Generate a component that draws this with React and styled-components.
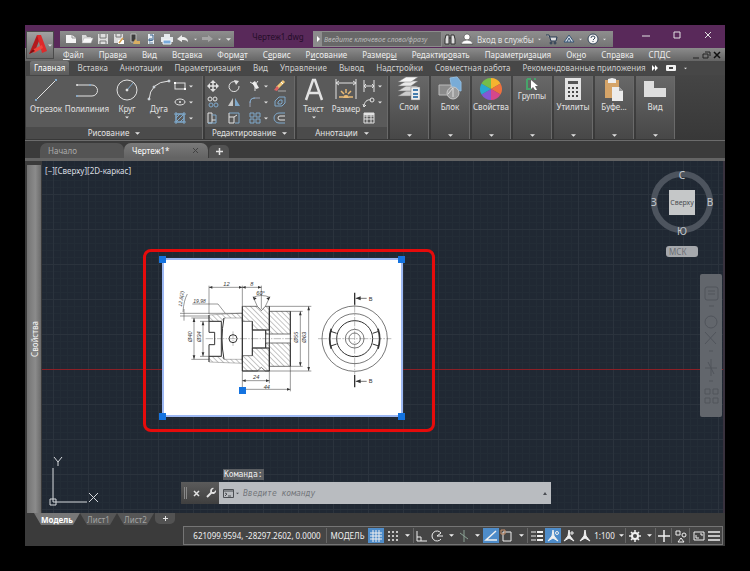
import React from "react";
import styled, { createGlobalStyle } from "styled-components";

const GlobalStyle = createGlobalStyle`
  * {
    box-sizing: border-box;
  }

  body {
    margin: 0;
    background-color: #000000;
    font-family: "Noto Sans", "Open Sans", sans-serif;
    font-size: 8px;
    color: #e2e2e2;
  }

  button, input {
    margin: 0;
    padding: 0;
    border: 0;
    background: none;
    color: inherit;
    font: inherit;
  }

  a {
    color: inherit;
    text-decoration: none;
  }

  svg {
    display: block;
    flex: none;
    overflow: visible;
  }
`;

const Page = styled.div`
  min-height: 100vh;
  padding: 25px;
  display: flex;
`;

const Window = styled.div`
  flex: 1;
  min-width: 0;
  display: flex;
  flex-direction: column;
  overflow: hidden;
  background-color: #3b3b3b;
`;

/* ---------- header ---------- */

const Header = styled.header`
  display: grid;
  grid-template-columns: 29px 1fr;
  grid-template-rows: 23px 13px;
  background: linear-gradient(#59295a 23px, #8b8b8b 23px, #656565);
`;

const AppButton = styled.button`
  grid-row: 1 / 3;
  margin: 6px 0 2px 1px;
  display: flex;
  align-items: center;
  justify-content: center;
  gap: 1px;
  background: linear-gradient(#a2a2a2, #6a6a6a);
  border: 1px solid #4a4a4a;
`;

const TitleBar = styled.div`
  display: flex;
  align-items: flex-end;
  min-width: 0;
  padding: 0 0 1px 6px;
`;

const QuickAccess = styled.div`
  display: flex;
  align-items: center;
  width: 174px;
  height: 16px;
  padding-left: 3px;
  background: linear-gradient(#8e8e8e, #707070);
`;

const QuickButton = styled.button`
  width: ${(p) => p.$width || 16}px;
  height: 16px;
  display: flex;
  align-items: center;
  justify-content: center;
`;

const FileName = styled.div`
  width: 79px;
  height: 16px;
  padding-left: 9px;
  text-align: center;
  line-height: 12px;
  color: #240d28;
`;

const Search = styled.form`
  display: flex;
  height: 16px;
  padding: 1px;
  background-color: #8c8c8c;
`;

const SearchToggle = styled.button`
  width: 8px;
  display: flex;
  align-items: center;
  justify-content: center;
`;

const SearchInput = styled.input`
  width: 119px;
  padding-left: 2px;
  background-color: #686868;
  font-size: 7px;
  font-style: italic;

  &::placeholder {
    color: #bababa;
    opacity: 1;
  }
`;

const InfoCenter = styled.div`
  display: flex;
  align-items: center;
  gap: 5px;
  width: 171px;
  height: 16px;
  padding-left: 2px;
  background: linear-gradient(#8e8e8e, #747474);
`;

const InfoButton = styled.button`
  display: flex;
  align-items: center;
  gap: 4px;
  white-space: nowrap;
`;

const WindowControls = styled.div`
  flex: 1;
  display: flex;
  justify-content: flex-end;
  gap: 17px;
  padding: 0 10px 5px 0;
`;

const ControlButton = styled.button`
  width: 14px;
  height: 14px;
  display: flex;
  align-items: center;
  justify-content: center;
`;

const MenuBar = styled.nav`
  display: flex;
  align-items: center;
  gap: 15px;
  min-width: 0;
  padding: 0 4px 0 9px;
  line-height: 12px;
  white-space: nowrap;
  color: #ededed;

  u {
    text-underline-offset: 1px;
  }
`;

const MdiControls = styled.div`
  margin-left: auto;
  display: flex;
  gap: 2px;
`;

/* ---------- ribbon ---------- */

const RibbonTabs = styled.div`
  display: flex;
  align-items: stretch;
  height: 14px;
  padding-left: 5px;
  background-color: #474747;
  white-space: nowrap;
`;

const RibbonTab = styled.button`
  padding: 0 ${(p) => (p.$active ? 4 : 6)}px;
  margin-right: ${(p) => (p.$active ? 2 : 0)}px;
  line-height: 12px;
  color: ${(p) => (p.$active ? "#ffffff" : "#d0d0d0")};
  background: ${(p) => (p.$active ? "linear-gradient(#777777, #5b5b5b)" : "none")};
  border-radius: 2px 2px 0 0;
`;

const RibbonExtra = styled.button`
  display: flex;
  align-items: center;
  gap: 8px;
`;

const Ribbon = styled.div`
  display: flex;
  gap: 2px;
  height: 66px;
  padding: 1px;
  background: linear-gradient(#454545, #383838);
  border-bottom: 1px solid #6c6c6c;
`;

const Panel = styled.section`
  display: flex;
  flex-direction: column;
  width: ${(p) => p.$width}px;
  background-color: #5a5a5a;
  border-right: 1px solid #6a6a6a;
`;

const PanelBody = styled.div`
  flex: 1;
  display: flex;
  align-items: flex-start;
  padding: 2px 0 0 ${(p) => p.$left || 0}px;
`;

const PanelTitle = styled.button`
  display: flex;
  align-items: center;
  justify-content: center;
  gap: 6px;
  height: 12px;
  line-height: 12px;
  background-color: #4b4b4b;
`;

const BigTool = styled.button`
  width: ${(p) => p.$width}px;
  display: flex;
  flex-direction: column;
  align-items: center;
  gap: 1px;
  white-space: nowrap;
  line-height: 12px;
`;

const ToolIcon = styled.span`
  height: 24px;
  display: flex;
  align-items: center;
`;

const SmallTools = styled.div`
  display: grid;
  grid-template-columns: ${(p) => p.$columns};
  grid-auto-rows: 16px;
`;

const SmallTool = styled.button`
  display: flex;
  align-items: center;
  gap: 3px;
`;

const FoldedPanel = styled.button`
  width: 39px;
  display: flex;
  flex-direction: column;
  align-items: center;
  padding: 1px 0 2px;
  background: linear-gradient(#686868, #474747);
  border-right: 1px solid #6a6a6a;
  line-height: 12px;
  white-space: nowrap;

  > :last-child {
    margin-top: auto;
  }
`;

const FoldedIcon = styled.span`
  height: ${(p) => (p.$small ? 13 : 24)}px;
  display: flex;
  align-items: center;
`;

/* ---------- document tabs ---------- */

const DocTabs = styled.div`
  display: flex;
  align-items: flex-end;
  height: 17px;
  padding-left: 15px;
`;

const DocTab = styled.button`
  display: flex;
  align-items: center;
  justify-content: space-between;
  width: 84px;
  height: 15px;
  padding: 0 10px 0 8px;
  border-radius: 7px 7px 0 0;
  color: ${(p) => (p.$active ? "#ffffff" : "#a9a9a9")};
  background: ${(p) => (p.$active ? "linear-gradient(#7a7a7a, #636363)" : "#545454")};
`;

const AddTab = styled.button`
  display: flex;
  align-items: center;
  justify-content: center;
  width: 20px;
  height: ${(p) => p.$height}px;
  margin-left: 1px;
  border-radius: ${(p) => (p.$bottom ? "0 0 5px 5px" : "5px 5px 0 0")};
  background-color: #525252;
`;

/* ---------- workspace ---------- */

const Workspace = styled.main`
  flex: 1;
  display: flex;
  min-height: 352px;
  border-top: 3px solid #646464;
  box-sizing: content-box;
`;

const PaletteBar = styled.aside`
  width: 14px;
  margin: 4px 1px 0 2px;
  display: flex;
  align-items: center;
  justify-content: center;
  background: linear-gradient(90deg, #747474, #8b8b8b 60%, #6b6b6b);
  color: #f5f5f5;

  span {
    writing-mode: vertical-rl;
    transform: rotate(180deg);
  }
`;

const Canvas = styled.div`
  position: relative;
  flex: 1;
  border-right: 2px solid #39323e;
  background-color: #202833;
  background-image:
    linear-gradient(#2b333d 1px, transparent 1px),
    linear-gradient(90deg, #2b333d 1px, transparent 1px),
    linear-gradient(#232c36 1px, transparent 1px),
    linear-gradient(90deg, #232c36 1px, transparent 1px);
  background-size: 35px 35px, 35px 35px, 7px 7px, 7px 7px;
  background-position: 11px 33px;
`;

const AxisLine = styled.div`
  position: absolute;
  left: 0;
  right: 0;
  top: 208px;
  height: 1px;
  background-color: #8c1f26;
`;

const ViewLabel = styled.div`
  position: absolute;
  left: 3px;
  top: 4px;
  line-height: 12px;
  color: #d8dce0;
`;

const Highlight = styled.div`
  position: absolute;
  left: 101px;
  top: 88px;
  width: 292px;
  height: 183px;
  border: 3px solid #e60b0b;
  border-radius: 8px;
`;

const Picture = styled.figure`
  position: absolute;
  left: 120px;
  top: 97px;
  width: 241px;
  height: 159px;
  margin: 0;
  border: 2px solid #9db8f3;
  background-color: #ffffff;
`;

const Grip = styled.i`
  position: absolute;
  left: ${(p) => p.$x}px;
  top: ${(p) => p.$y}px;
  width: 7px;
  height: 7px;
  background-color: #1473e0;
`;

const ViewCube = styled.div`
  position: absolute;
  right: 8px;
  top: 6px;
`;

const UcsButton = styled.button`
  position: absolute;
  right: 25px;
  top: 85px;
  width: 32px;
  height: 11px;
  padding-left: 3px;
  text-align: left;
  line-height: 10px;
  border-radius: 3px;
  background-color: #a5a8ac;
  color: #6b6e73;
`;

const NavBar = styled.div`
  position: absolute;
  right: 1px;
  top: 113px;
  width: 22px;
  height: 143px;
  border-radius: 2px;
  background-color: #62666c;
`;

const UcsIcon = styled.div`
  position: absolute;
  left: 7px;
  bottom: 7px;
`;

const CommandTag = styled.div`
  position: absolute;
  left: 181px;
  bottom: 33px;
  width: 41px;
  height: 11px;
  padding-left: 1px;
  background-color: #5c5f63;
  font-family: "DejaVu Sans Mono", monospace;
  line-height: 11px;
  color: #f0f0f0;
`;

const CommandLine = styled.form`
  position: absolute;
  left: 139px;
  bottom: 9px;
  width: 370px;
  height: 22px;
  display: flex;
  background-color: #b9bcc0;
`;

const CommandTools = styled.div`
  width: 38px;
  display: flex;
  align-items: center;
  gap: 6px;
  padding-left: 3px;
  background: linear-gradient(#5b5b5b, #3f3f3f);
`;

const CommandInput = styled.input`
  flex: 1;
  min-width: 0;
  font-family: "DejaVu Sans Mono", monospace;
  font-style: italic;

  &::placeholder {
    color: #74777c;
    opacity: 1;
  }
`;

const CommandButton = styled.button`
  display: flex;
  align-items: center;
  gap: 2px;
  padding: 0 4px;
  color: #4b4e53;
`;

/* ---------- bottom ---------- */

const LayoutTabs = styled.div`
  display: flex;
  height: 13px;
  padding-left: 9px;
`;

const LayoutTab = styled.button`
  width: ${(p) => (p.$active ? 46 : 37)}px;
  height: 12px;
  clip-path: polygon(0 0, 100% 0, calc(100% - 7px) 100%, 7px 100%);
  line-height: 11px;
  font-weight: ${(p) => (p.$active ? 700 : 400)};
  color: ${(p) => (p.$active ? "#ffffff" : "#a3a3a3")};
  background: ${(p) => (p.$active ? "#777777" : "#565656")};
`;

const StatusBar = styled.footer`
  display: flex;
  align-items: center;
  height: 19px;
  margin: 0 2px 1px 158px;
  border: 1px solid #757575;
  background-color: #454545;
  color: #f0f0f0;
`;

const Coords = styled.div`
  flex: none;
  width: 143px;
  padding-left: 4px;
  text-align: center;
  border-right: 1px solid #666666;
  line-height: 15px;
  white-space: nowrap;
`;

const StatusButton = styled.button`
  flex: none;
  width: ${(p) => p.$width}px;
  height: 15px;
  display: flex;
  align-items: center;
  justify-content: center;
  gap: 4px;
  background-color: ${(p) => (p.$on ? "#4e8cc9" : "transparent")};
  border-left: ${(p) => (p.$split ? "1px solid #666666" : "0")};
`;

/* ---------- icons ---------- */

function Icon({ w = 12, h = w, box, children, ...rest }) {
  return (
    <svg
      width={w}
      height={h}
      viewBox={box || `0 0 ${w} ${h}`}
      fill="none"
      stroke="currentColor"
      aria-hidden="true"
      {...rest}
    >
      {children}
    </svg>
  );
}

const Caret = ({ w = 5 }) => (
  <Icon w={w} h={3} box="0 0 6 3">
    <path d="M0 0H6L3 3Z" fill="currentColor" stroke="none" />
  </Icon>
);

const blue = "#7fa9cc";

const quickIcons = [
  ["Создать", <Icon><path d="M1 2H7L11 5V10H1Z" fill="#f4f4f4" stroke="none" /><path d="M7 2V5H11" stroke="#999999" /></Icon>],
  ["Открыть", <Icon><path d="M1 10V2H5L6 4H10V6" fill="#d9d9d9" stroke="none" /><path d="M1 10L3 5H12L10 10Z" fill="#f8f8f8" stroke="#aaaaaa" strokeWidth=".5" /></Icon>],
  ["Сохранить", <Icon><path d="M1 1H11V11H1Z" fill="#dddddd" stroke="none" /><path d="M3 1V5H9V1M3 11V8H9V11" stroke="#777777" /></Icon>],
  ["Сохранить как", <Icon><path d="M1 1H10V10H1Z" fill="#dddddd" stroke="none" /><path d="M3 1V4H8V1" stroke="#777777" /><path d="M5 7H11V11H5Z" fill="#ffffff" stroke="none" /><path d="M6 10L10 5" stroke="#d69d48" strokeWidth="1.5" /></Icon>],
  ["Веб", <Icon><path d="M2 1H7V9H2Z" fill="#3c3c3c" stroke="#bbbbbb" /><path d="M4 11H11V8H8L6 6Z" fill="#d9ae62" stroke="none" /></Icon>],
  ["Мобильные", <Icon><path d="M3 1H9V11H3Z" fill="#e8eef4" stroke="none" /><path d="M5 2H8V7L4 8V6H7" stroke="#315a85" /><path d="M4 10H8" stroke="#64809c" /></Icon>],
  ["Печать", <Icon><path d="M3 1H9V5H3ZM0 4H12V9H0Z" fill="#e5e9ed" stroke="none" /><path d="M2 7H10V11H2Z" fill="#79abdc" stroke="#f5f5f5" /></Icon>],
  ["Отменить", <Icon><path d="M0 6L5 2V4C9 4 11 6 11 9C9 7 8 7 5 7V9Z" fill="#eeeeee" stroke="none" /></Icon>],
];

const AppLogo = () => (
  <Icon w={18} h={20} stroke="none">
    <path d="M0 19L8 0L12 1L6 16Z" fill="#b3191d" />
    <path d="M8 0H12L18 16L13 18Z" fill="#dd2a2b" />
    <path d="M3 15L13 10L14 13L5 18Z" fill="#f0443c" />
    <path d="M0 19L4 14L6 16Z" fill="#7d0e12" />
  </Icon>
);

const smallDraw = [
  <Icon><rect x="1" y="3" width="10" height="6" /><path d="M0 2H2V4H0ZM10 8H12V10H10Z" fill="#ffffff" stroke="none" /></Icon>,
  <Icon><ellipse cx="6" cy="6" rx="5" ry="3" /><circle cx="6" cy="6" r="1" fill="currentColor" stroke="none" /></Icon>,
  <Icon stroke={blue}><path d="M2 2H10V10H2ZM0 2H12M0 10H12M2 0V12M10 0V12M2 6L6 2M2 10L10 2M6 10L10 6" /></Icon>,
];

const editTools = [
  [<Icon><path d="M6 1V11M1 6H11" strokeWidth="1.5" /><path d="M6 0L9 3H3ZM6 12L3 9H9ZM0 6L3 3V9ZM12 6L9 9V3Z" fill="currentColor" stroke="none" /></Icon>],
  [<Icon><path d="M8 2A5 5 0 1 0 11 6" /><path d="M6 0L11 1L8 5Z" fill="currentColor" stroke="none" /></Icon>],
  [<Icon><path d="M1 2L6 5L9 1M6 5V11" /><path d="M3 3L6 1L10 8L7 9Z" fill="#eeeeee" stroke="none" /></Icon>, true],
  [<Icon><path d="M3 8L10 1" stroke="#f1c777" strokeWidth="3" /><path d="M0 10L3 6L5 8L3 11Z" fill="#dc6161" stroke="none" /><path d="M7 2L9 4" stroke="#ffffff" /><path d="M4 11H12" stroke="#aaaaaa" /></Icon>],
  [<Icon><circle cx="3" cy="3" r="2" /><circle cx="8" cy="3" r="2" /><circle cx="4" cy="9" r="2" stroke={blue} /><circle cx="9" cy="9" r="2" stroke={blue} /></Icon>],
  [<Icon><path d="M5 2V10H0Z" fill="#c6c6c6" stroke="none" /><path d="M7 2V10H12Z" fill={blue} stroke="none" /></Icon>],
  [<Icon><path d="M1 11V7Q1 2 6 2H11" stroke="#9a9fb0" /><path d="M1 7Q1 2 6 2" stroke={blue} /></Icon>, true],
  [<Icon stroke={blue}><path d="M1 10V5L5 1H11V7L8 10Z" /><path d="M4 8V6L6 4H8V7L7 8Z" /></Icon>],
  [<Icon><path d="M1 11V1H5V11ZM5 8H9" /><path d="M5 3H9V11H1" stroke={blue} /></Icon>],
  [<Icon><path d="M1 1H11V11H7" stroke={blue} /><path d="M1 5H6V11H1ZM1 5V1M6 5L9 3" /></Icon>],
  [<Icon stroke={blue}><path d="M1 1H5V5H1ZM7 1H11V5H7ZM1 7H5V11H1ZM7 7H11V11H7Z" /></Icon>, true],
  [<Icon><path d="M11 1H5A5 5 0 0 0 5 11H11" stroke={blue} /><path d="M11 4H6A2 2 0 0 0 6 8H11" /></Icon>],
];

const annotationTools = [
  [<Icon><path d="M1 0V12M11 0V12M1 6H11M3 4L1 6L3 8M9 4L11 6L9 8" /></Icon>, true],
  [<Icon><path d="M1 11C1 6 4 3 8 4M0 8L1 11L3 9" /><circle cx="9" cy="4" r="2" /></Icon>, true],
  [<Icon><path d="M1 1H11V11H1ZM1 4H11M1 7H11M4 2V11M8 2V11" /><path d="M1 2H11" strokeWidth="2" /></Icon>],
];

const Wheel = () => (
  <Icon w={24} stroke="none">
    <path d="M12 12V1A11 11 0 0 1 21.5 6.5Z" fill="#f6b32f" />
    <path d="M12 12L21.5 6.5A11 11 0 0 1 21.5 17.5Z" fill="#ef713e" />
    <path d="M12 12L21.5 17.5A11 11 0 0 1 12 23Z" fill="#d6478b" />
    <path d="M12 12V23A11 11 0 0 1 2.5 17.5Z" fill="#8357d5" />
    <path d="M12 12L2.5 17.5A11 11 0 0 1 2.5 6.5Z" fill="#28a9cf" />
    <path d="M12 12L2.5 6.5A11 11 0 0 1 12 1Z" fill="#75bd4a" />
  </Icon>
);

const foldedPanels = [
  ["Слои", <Icon w={22} h={24} stroke="#777777" strokeWidth=".5"><path d="M0 19L8 14H20L13 19Z" fill="#cccccc" /><path d="M0 14L8 9H20L13 14Z" fill="#d9d9d9" /><path d="M0 9L8 4H20L13 9Z" fill="#e9e9e9" /><path d="M0 5L8 0H20L13 5Z" fill="#f5f5f5" /><path d="M13 10H22V23H13Z" fill="#eeeeee" /><path d="M15 13H20M15 17H20M15 20H20" stroke="#477eae" strokeWidth="2" /></Icon>],
  ["Блок", <Icon w={24}><path d="M12 1L19 0L23 5V14L14 12Z" fill="#79acd7" stroke="#90bce1" /><path d="M1 8H13V18H1Z" fill="#8b8b8b" stroke="#bbbbbb" /><circle cx="15" cy="16" r="6" fill="#9c9c9c" stroke="#c8c8c8" /><path d="M15 11V20M10 17L15 11" stroke="#dddddd" /></Icon>],
  ["Свойства", <Wheel />],
  ["Группы", <Icon w={12}><path d="M1 1H5M1 1V11H5M8 1H10" stroke="#47a36a" strokeWidth="2" /><path d="M5 2L12 8L9 8L11 12L9 12L7 9L5 11Z" fill="#ffffff" stroke="none" /></Icon>, true],
  ["Утилиты", <Icon w={18} h={23}><path d="M1 0H17V22H1Z" fill="#e4e4e4" stroke="none" /><path d="M4 3H14V6H4Z" fill="#555555" stroke="none" /><path d="M4 10H14M4 14H14M4 18H14" stroke="#484848" strokeWidth="2" strokeDasharray="2 2" /></Icon>],
  ["Буфе...", <Icon w={20} h={23} stroke="none"><path d="M1 2H15V20H1Z" fill="#d5a468" /><path d="M4 1L8 0L12 1V5H4Z" fill="#eeeeee" /><path d="M8 9H15L19 13V23H8Z" fill="#ececec" /><path d="M15 9V13H19Z" fill="#999999" /></Icon>],
  ["Вид", <Icon w={22} h={18} stroke="none"><path d="M0 1H10V8H22V17H0Z" fill="#dedede" /></Icon>],
];

const menus = [
  ["", "Ф", "айл"],
  ["Прав", "к", "а"],
  ["Ви", "д", ""],
  ["Вс", "т", "авка"],
  ["Форм", "а", "т"],
  ["С", "е", "рвис"],
  ["Р", "и", "сование"],
  ["Размер", "ы", ""],
  ["Редактир", "о", "вать"],
  ["Параметри", "з", "ация"],
  ["Ок", "н", "о"],
  ["Спр", "а", "вка"],
  ["СПДС", "", ""],
];

const ribbonTabs = [
  "Главная",
  "Вставка",
  "Аннотации",
  "Параметризация",
  "Вид",
  "Управление",
  "Вывод",
  "Надстройки",
  "Совместная работа",
  "Рекомендованные приложения",
];

function ToolGrid({ tools, columns, name }) {
  return (
    <SmallTools $columns={columns}>
      {tools.map(([icon, caret], i) => (
        <SmallTool key={i} aria-label={`${name} ${i + 1}`}>
          {icon}
          {caret && <Caret w={4} />}
        </SmallTool>
      ))}
    </SmallTools>
  );
}

/* Adapter section on the left, front view on the right */
function PartDrawing() {
  return (
    <svg width="237" height="155" viewBox="70 48 711 465" fill="none" stroke="#333333" strokeWidth="2">
      <defs>
        <pattern id="hatch" width="11" height="11" patternUnits="userSpaceOnUse" patternTransform="rotate(-45)">
          <path d="M0 0V11" stroke="#555555" strokeWidth="2" />
        </pattern>
      </defs>
      <path d="M305 187H350L362 200L374 187H386V258H335V232H305ZM305 335H335V312H386V381H374L362 370L350 381H305Z" fill="url(#hatch)" />
      <path d="M386 202H449V270H375V258H386ZM375 297H449V367H386V312H375Z" fill="url(#hatch)" />
      <path d="M205 213L305 207V222H250L242 232H205ZM205 337H242L250 346H305V358L205 354Z" fill="url(#hatch)" strokeWidth="1" />
      <path d="M205 213V265H222V302H205V354M205 232H242V337H205M250 222Q238 284 250 346M305 187V381H386V187M305 222V346M335 232V335M335 258H375V312H335M449 202V367" strokeWidth="3" />
      <circle cx="277" cy="284" r="12" strokeWidth="3" />
      <path d="M195 284H470M277 262V306" strokeWidth="1" strokeDasharray="22 4 4 4" />
      <g strokeWidth="1.5">
        <path d="M205 125V210M305 125V187M362 125V195M205 130H362M386 187H512M386 381H512M504 187V381M449 202H486M449 367H486M479 202V367" />
        <path d="M305 381V430M386 381V418M305 410H386M449 367V442M315 436H449" />
        <path d="M160 222V346M187 232V337M152 222H205M152 346H205M178 232H205M178 337H205M118 208H305M118 216H205M130 195V230M127 204Q129 170 140 150M155 180H232L254 208" />
        <path d="M350 187L337 158M374 187L388 158M337 160Q362 149 388 160" />
      </g>
      <g fill="#333333" stroke="none">
        <path d="M205 130L215 126V134ZM305 130L295 126V134ZM305 130L315 126V134ZM362 130L352 126V134ZM305 410L315 406V414ZM386 410L376 406V414ZM449 436L439 432V440Z" />
        <path d="M504 187L500 199H508ZM504 381L500 369H508ZM479 202L475 214H483ZM479 367L475 355H483ZM160 222L156 234H164ZM160 346L156 334H164ZM187 232L183 244H191ZM187 337L183 325H191Z" />
        <path d="M337 158L340 169L348 163ZM388 158L377 163L384 169ZM645 163L660 157V169ZM645 412L660 406V418Z" />
      </g>
      <circle cx="642" cy="284" r="98" />
      <circle cx="642" cy="284" r="75" />
      <circle cx="642" cy="284" r="54" strokeWidth="3" />
      <circle cx="642" cy="284" r="28" />
      <circle cx="642" cy="284" r="17" />
      <path d="M572 254Q562 284 572 314M712 254Q722 284 712 314" strokeWidth="5" />
      <path d="M570 262L588 268M570 306L588 300M714 262L696 268M714 306L696 300" strokeWidth="3" />
      <path d="M532 284H752M642 178V392" strokeWidth="1" strokeDasharray="28 4 5 4" />
      <path d="M642 146V182M642 393V430" strokeWidth="4" />
      <path d="M645 163H678M645 412H678" />
      <g fill="#333333" stroke="none" fontFamily="Liberation Sans, sans-serif" fontSize="17" fontStyle="italic">
        <text x="248" y="125">12</text>
        <text x="329" y="125">8</text>
        <text x="347" y="154">60°</text>
        <text x="337" y="406">24</text>
        <text x="369" y="434">44</text>
        <text x="158" y="176" fontSize="15">19,98</text>
        <text x="684" y="170" fontStyle="normal">B</text>
        <text x="684" y="418" fontStyle="normal">B</text>
        <text transform="translate(123 188) rotate(-82)" fontSize="15">12,8(2)</text>
        <text transform="translate(154 294) rotate(-90)">Ø40</text>
        <text transform="translate(180 294) rotate(-90)">Ø34</text>
        <text transform="translate(471 296) rotate(-90)">Ø55</text>
        <text transform="translate(497 296) rotate(-90)">Ø63</text>
      </g>
    </svg>
  );
}

const Person = ({ n }) => (
  <Icon>
    <path d="M6 0L7 6L11 11L6 8L1 11L5 6Z" fill="currentColor" />
    {n === 1 && <path d="M9 1V5M7 3H11" />}
    {n === 2 && <circle cx="10" cy="3" r="1.5" />}
  </Icon>
);

const statusItems = [
  { w: 16, on: true, icon: <Icon><path d="M3 0V12M6 0V12M9 0V12M0 3H12M0 6H12M0 9H12" /></Icon>, name: "Сетка" },
  { w: 17, icon: <Icon><path d="M1 2H11M1 6H11M1 10H11" strokeWidth="1.5" strokeDasharray="2 2" /></Icon>, name: "Шаг" },
  { w: 12, icon: <Caret />, name: "Параметры шага" },
  { w: 16, split: true, icon: <Icon><path d="M1 1V11H11M1 7H5V11" /></Icon>, name: "Орто" },
  { w: 16, icon: <Icon><path d="M10 3A5 5 0 1 0 10 9M6 6H12M6 6L10 3" /></Icon>, name: "Полярное отслеживание" },
  { w: 12, icon: <Caret />, name: "Параметры отслеживания" },
  { w: 14, icon: <Icon stroke="#8aa193"><path d="M6 0V12M2 3L10 9" /></Icon>, name: "Изометрия" },
  { w: 12, icon: <Caret />, name: "Параметры изометрии" },
  { w: 16, on: true, icon: <Icon><path d="M11 1L1 10H12" strokeWidth="1.5" /></Icon>, name: "Объектное отслеживание" },
  { w: 16, icon: <Icon><path d="M2 2H10V11H2Z" /><path d="M0 0H4V4H0Z" stroke="#c68f6b" /></Icon>, name: "Привязка" },
  { w: 12, icon: <Caret />, name: "Параметры привязки" },
  { w: 18, split: true, icon: <Icon><path d="M0 2H5M0 6H5M0 10H5" /><path d="M6 2H12M6 6H12M6 10H12" strokeWidth="2" /></Icon>, name: "Вес линий" },
  { w: 16, on: true, icon: <Person n={2} />, name: "Видимость аннотаций" },
  { w: 16, icon: <Person n={1} />, name: "Автомасштаб" },
  { w: 16, icon: <Person n={0} />, name: "Масштаб аннотаций" },
  { w: 32, icon: <>1:100 <Caret /></>, name: "Масштаб 1:100" },
  { w: 18, split: true, icon: <Icon><circle cx="6" cy="6" r="3" strokeWidth="2" /><path d="M6 0V3M6 9V12M0 6H3M9 6H12M2 2L4 4M8 8L10 10M10 2L8 4M4 8L2 10" strokeWidth="1.5" /></Icon>, name: "Рабочее пространство" },
  { w: 12, icon: <Caret />, name: "Параметры пространства" },
  { w: 16, split: true, icon: <Icon><path d="M6 0V12M0 6H12" strokeWidth="1.5" /></Icon>, name: "Монитор аннотаций" },
  { w: 18, split: true, icon: <Icon><path d="M1 1H5V5H1ZM6 8L3 12H9Z" /><circle cx="9" cy="5" r="2" /></Icon>, name: "Изоляция объектов" },
  { w: 18, split: true, icon: <Icon><path d="M1 2H11V10H1ZM3 8V5M3 8H6M9 4V6M9 4H7" /></Icon>, name: "Очистить экран" },
  { w: 14, icon: <Icon><path d="M0 2H12M0 6H12M0 10H12" strokeWidth="1.5" /></Icon>, name: "Адаптация" },
];

function HeaderArea() {
  return (
    <Header>
      <AppButton aria-label="Меню приложения">
        <AppLogo />
        <Caret w={4} />
      </AppButton>
      <TitleBar>
        <QuickAccess>
          {quickIcons.map(([name, icon]) => (
            <QuickButton key={name} aria-label={name}>{icon}</QuickButton>
          ))}
          <QuickButton $width={8} aria-label="Список отмены"><Caret w={3} /></QuickButton>
          <QuickButton aria-label="Повторить">
            <Icon><path d="M12 6L7 2V4H1V7H7V9Z" fill="#a5a5a5" stroke="none" /></Icon>
          </QuickButton>
          <QuickButton $width={8} aria-label="Список повтора"><Caret w={3} /></QuickButton>
          <QuickButton $width={11} aria-label="Настройка панели"><Caret w={5} /></QuickButton>
        </QuickAccess>
        <FileName>Чертеж1.dwg</FileName>
        <Search>
          <SearchToggle type="button" aria-label="Развернуть поиск">
            <Icon w={3} h={6}><path d="M0 0L3 3L0 6Z" fill="#ffffff" stroke="none" /></Icon>
          </SearchToggle>
          <SearchInput aria-label="Поиск" placeholder="Введите ключевое слово/фразу" />
        </Search>
        <InfoCenter>
          <InfoButton aria-label="Найти">
            <Icon stroke="#333333"><path d="M2 2H5V11H1V6ZM7 2H10L11 6V11H7ZM5 5H7" fill="#dddddd" /></Icon>
          </InfoButton>
          <InfoButton>
            <Icon stroke="#333333" strokeWidth=".5"><circle cx="6" cy="4" r="3" fill="#ffffff" /><path d="M0 11Q1 7 6 7Q11 7 12 11Z" fill="#ffffff" /></Icon>
            Вход в службы
            <Caret w={3} />
          </InfoButton>
          <InfoButton aria-label="Магазин">
            <Icon stroke="#263951"><path d="M0 2H3L5 8H10L11 4H4" fill="#dddddd" /><circle cx="5" cy="10" r="1" /><circle cx="9" cy="10" r="1" /></Icon>
          </InfoButton>
          <InfoButton aria-label="Связь">
            <Icon stroke="#365575"><path d="M6 2L1 9H11ZM6 5L4 9M6 5L8 9" fill="#d3dce5" /></Icon>
            <Caret w={3} />
          </InfoButton>
          <InfoButton aria-label="Справка">
            <Icon stroke="#35465a"><circle cx="6" cy="6" r="5" fill="#f5f5f5" /><path d="M4 5Q4 3 6 3Q8 3 8 5L6 7M6 8V9" /></Icon>
            <Caret w={3} />
          </InfoButton>
        </InfoCenter>
        <WindowControls>
          <ControlButton aria-label="Свернуть"><Icon w={8}><path d="M0 5H8" /></Icon></ControlButton>
          <ControlButton aria-label="Развернуть"><Icon w={8}><path d="M1 1H7V7H1Z" /></Icon></ControlButton>
          <ControlButton aria-label="Закрыть"><Icon w={8}><path d="M1 1L7 7M7 1L1 7" /></Icon></ControlButton>
        </WindowControls>
      </TitleBar>
      <MenuBar>
        {menus.map(([before, key, after]) => (
          <a href="#menu" key={before + key}>{before}<u>{key}</u>{after}</a>
        ))}
        <MdiControls>
          <button aria-label="Свернуть чертеж"><Icon w={8} stroke="#222222"><path d="M1 7H7" /></Icon></button>
          <button aria-label="Восстановить чертеж"><Icon w={9} h={8} stroke="#222222"><path d="M3 1H8V5M1 3H6V7H1Z" /></Icon></button>
          <button aria-label="Закрыть чертеж"><Icon w={8} stroke="#111111"><path d="M1 1L7 7M7 1L1 7" strokeWidth="1.5" /></Icon></button>
        </MdiControls>
      </MenuBar>
    </Header>
  );
}

function RibbonArea() {
  return (
    <>
      <RibbonTabs>
        {ribbonTabs.map((name, i) => (
          <RibbonTab key={name} $active={i === 0}>{name}</RibbonTab>
        ))}
        <RibbonExtra aria-label="Вид ленты">
          <Icon w={6}><path d="M0 0L3 3L0 6ZM3 0L6 3L3 6Z" fill="#ffffff" stroke="none" /></Icon>
          <Icon w={10} h={6}><rect width="10" height="6" rx="1" fill="#f1f1f1" stroke="none" /><path d="M3 3H7" stroke="#444444" strokeWidth="2" /></Icon>
          <Caret w={3} />
        </RibbonExtra>
      </RibbonTabs>
      <Ribbon>
        <Panel $width={177}>
          <PanelBody $left={2}>
            <BigTool $width={36}>
              <ToolIcon><Icon w={22}><path d="M1 21L21 1" /><path d="M0 20H2V22H0ZM20 0H22V2H20Z" fill={blue} stroke="none" /></Icon></ToolIcon>
              Отрезок
            </BigTool>
            <BigTool $width={46}>
              <ToolIcon><Icon w={24} h={20}><path d="M2 5H17A5 5 0 0 1 17 16H1" /><circle cx="2" cy="5" r="1" fill="currentColor" stroke="none" /><circle cx="15" cy="5" r="1" fill={blue} stroke="none" /><circle cx="2" cy="16" r="1" fill={blue} stroke="none" /></Icon></ToolIcon>
              Полилиния
            </BigTool>
            <BigTool $width={34}>
              <ToolIcon><Icon w={22}><circle cx="11" cy="11" r="10" /><path d="M11 11L17 4" stroke={blue} /><circle cx="11" cy="11" r="1" fill="#ffffff" /></Icon></ToolIcon>
              Круг
              <Caret w={4} />
            </BigTool>
            <BigTool $width={30}>
              <ToolIcon><Icon w={22}><path d="M1 21Q2 3 21 2" /><circle cx="1" cy="20" r="1" fill={blue} /><circle cx="6" cy="8" r="1" fill={blue} /><circle cx="21" cy="2" r="1" fill={blue} /></Icon></ToolIcon>
              Дуга
              <Caret w={4} />
            </BigTool>
            <ToolGrid name="Рисование" columns="24px" tools={smallDraw.map((icon) => [icon, true])} />
          </PanelBody>
          <PanelTitle>Рисование <Caret /></PanelTitle>
        </Panel>
        <Panel $width={90}>
          <PanelBody $left={2}>
            <ToolGrid name="Редактирование" columns="21px 21px 25px 16px" tools={editTools} />
          </PanelBody>
          <PanelTitle>Редактирование <Caret /></PanelTitle>
        </Panel>
        <Panel $width={91}>
          <PanelBody $left={1}>
            <BigTool $width={31}>
              <ToolIcon><Icon w={18} h={22}><path d="M1 21L8 1H10L17 21M4 14H14" strokeWidth="2.5" /></Icon></ToolIcon>
              Текст
              <Caret w={4} />
            </BigTool>
            <BigTool $width={34}>
              <ToolIcon><Icon w={22} h={22}><path d="M1 0V20M21 0V20M1 4H21M4 2L1 4L4 6M18 2L21 4L18 6" /><path d="M4 18H8M14 18H18M6 12L9 15M11 10V14M16 12L13 15" stroke="#e9ba75" strokeWidth="1.5" /><path d="M8 19A3 3 0 0 1 14 19" fill="#e9ba75" stroke="none" /></Icon></ToolIcon>
              Размер
            </BigTool>
            <ToolGrid name="Аннотации" columns="22px" tools={annotationTools} />
          </PanelBody>
          <PanelTitle>Аннотации <Caret /></PanelTitle>
        </Panel>
        {foldedPanels.map(([name, icon, small]) => (
          <FoldedPanel key={name}>
            <FoldedIcon $small={small}>{icon}</FoldedIcon>
            <span>{name}</span>
            <Caret />
          </FoldedPanel>
        ))}
      </Ribbon>
      <DocTabs>
        <DocTab>Начало</DocTab>
        <DocTab $active>Чертеж1* <Icon w={5}><path d="M0 0L5 5M5 0L0 5" stroke="#424242" /></Icon></DocTab>
        <AddTab $height={13} aria-label="Новый чертеж"><Icon w={7}><path d="M3.5 0V7M0 3.5H7" strokeWidth="1.5" /></Icon></AddTab>
      </DocTabs>
    </>
  );
}

function DrawingArea() {
  return (
    <Workspace>
      <PaletteBar><span>Свойства</span></PaletteBar>
      <Canvas>
        <AxisLine />
        <ViewLabel>[−][Сверху][2D-каркас]</ViewLabel>
        <Highlight />
        <Picture><PartDrawing /></Picture>
        <Grip $x={117} $y={95} />
        <Grip $x={356} $y={95} />
        <Grip $x={117} $y={252} />
        <Grip $x={356} $y={252} />
        <Grip $x={197} $y={226} />
        <ViewCube>
          <svg width="66" height="72" fill="#c4c8cd" fontSize="10" textAnchor="middle">
            <circle cx="33" cy="35" r="28" fill="none" stroke="#4d545e" strokeWidth="6" />
            <rect x="20" y="23" width="26" height="25" fill="#c5c7c8" />
            <text x="33" y="12">С</text>
            <text x="61" y="39">В</text>
            <text x="33" y="68">Ю</text>
            <text x="5" y="39">З</text>
            <text x="33" y="38" fontSize="7" fill="#4b4e52">Сверху</text>
          </svg>
        </ViewCube>
        <UcsButton>МСК</UcsButton>
        <NavBar>
          <Icon w={22} h={143} stroke="#50545b">
            <rect x="5" y="13" width="13" height="13" rx="2" />
            <path d="M8 17H15M8 20H15M9 32H14" />
            <circle cx="11" cy="48" r="6" />
            <path d="M5 58L16 70M16 58L5 70M9 77H13M11 85V102M5 94H17M8 88L14 100M9 107H13M5 115H10V120H5ZM13 115H18V120H13ZM5 124H10V129H5ZM13 124H18V129H13Z" />
          </Icon>
        </NavBar>
        <UcsIcon>
          <Icon w={52} h={52} stroke="#d5d8dc">
            <path d="M4 14V48H38M1 45H7V51H1ZM5 3L9 8L13 3M9 8V12M40 39L49 48M49 39L40 48" />
          </Icon>
        </UcsIcon>
        <CommandTag>Команда:</CommandTag>
        <CommandLine>
          <CommandTools>
            <Icon w={3} h={12} stroke="#888888"><path d="M0.5 0V12M2.5 0V12" /></Icon>
            <button type="button" aria-label="Закрыть"><Icon w={7}><path d="M1 1L6 6M6 1L1 6" strokeWidth="1.5" /></Icon></button>
            <button type="button" aria-label="Настройка"><Icon w={10}><path d="M1 9L6 4" strokeWidth="2" /><path d="M8 0L6 2V4H8L10 2A3 3 0 0 1 5 5A3 3 0 0 1 8 0Z" fill="currentColor" stroke="none" /></Icon></button>
          </CommandTools>
          <CommandButton type="button" aria-label="Последние команды">
            <Icon w={11} h={9}><path d="M.5 .5H10.5V8.5H.5ZM0 2H11M2 4L4 5L2 7M5 7H8" /></Icon>
            <Caret w={3} />
          </CommandButton>
          <CommandInput aria-label="Команда" placeholder="Введите команду" />
          <CommandButton type="button" aria-label="История команд">
            <Icon w={4} h={3}><path d="M0 3H4L2 0Z" fill="currentColor" stroke="none" /></Icon>
          </CommandButton>
        </CommandLine>
      </Canvas>
    </Workspace>
  );
}

function App() {
  return (
    <Page>
      <GlobalStyle />
      <Window>
        <HeaderArea />
        <RibbonArea />
        <DrawingArea />
        <LayoutTabs>
          <LayoutTab $active>Модель</LayoutTab>
          <LayoutTab>Лист1</LayoutTab>
          <LayoutTab>Лист2</LayoutTab>
          <AddTab $bottom $height={11} aria-label="Новый лист"><Icon w={5}><path d="M2.5 0V5M0 2.5H5" /></Icon></AddTab>
        </LayoutTabs>
        <StatusBar>
          <Coords>621099.9594, -28297.2602, 0.0000</Coords>
          <StatusButton $width={41}>МОДЕЛЬ</StatusButton>
          {statusItems.map((item) => (
            <StatusButton key={item.name} $width={item.w} $on={item.on} $split={item.split} aria-label={item.name}>
              {item.icon}
            </StatusButton>
          ))}
        </StatusBar>
      </Window>
    </Page>
  );
}

export default App;
